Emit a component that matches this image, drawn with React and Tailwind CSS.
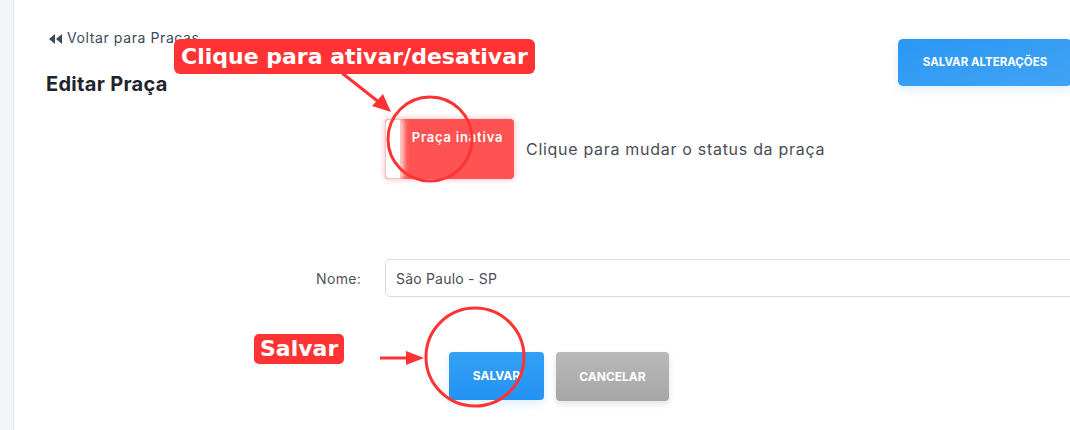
import React from "react";

const inter = { fontFamily: "Inter, 'Noto Sans', sans-serif" };
const dejavu = { fontFamily: "'DejaVu Sans', sans-serif" };

export default function App() {
  return (
    <div className="relative w-[1070px] h-[430px] overflow-hidden bg-white flex" style={inter}>
      <div className="w-[14px] shrink-0 bg-[#f4f5f8] border-r border-[#e9eaef]" />
      <div className="flex-1 pl-[32px] pt-[28px] flex flex-col">
        <div className="flex justify-between">
          <div className="flex flex-col">
            <div className="flex items-center gap-[4px] text-[14px] tracking-[0.6px] text-[#3d4a5c] leading-[20px] pl-[3px]">
              <svg width="14" height="10" viewBox="0 0 14 10" className="mt-[1px]">
                <path d="M6 0 L0 5 L6 10 Z M13 0 L7 5 L13 10 Z" fill="#3d4a5c" />
              </svg>
              <span>Voltar para Praças</span>
            </div>
            <div className="mt-[23px] text-[20px] tracking-[0.3px] font-bold text-[#1f232b] leading-[26px]">Editar Praça</div>
          </div>
          <button className="mt-[11px] -mr-[2px] w-[174px] h-[47px] rounded-[5px] bg-gradient-to-br from-[#2a97f3] to-[#41a3f5] text-white text-[11.5px] font-bold shadow-[0_4px_10px_rgba(33,150,243,0.15)]">
            SALVAR ALTERAÇÕES
          </button>
        </div>

        <div className="grid grid-cols-[315px_1fr] gap-x-[24px] mt-[22px]">
          <div />
          <div className="flex items-center gap-[12px] h-[60px]">
            <div className="relative w-[129px] h-[60px] rounded-[4px] bg-[#ff5252] shadow-[0_0_6px_rgba(255,82,82,0.45)] overflow-hidden flex">
              <div className="w-[16px] h-full bg-white border border-[#f3c2c2] rounded-l-[4px] shadow-[3px_0_5px_rgba(255,230,230,0.9)]" />
              <div className="flex-1 text-center text-white text-[13px] tracking-[0.8px] font-semibold pt-[10px] leading-[16px]">Praça inativa</div>
            </div>
            <span className="text-[16px] tracking-[0.7px] text-[#4a4d55]">Clique para mudar o status da praça</span>
          </div>

          <div className="mt-[80px] text-right text-[14px] tracking-[0.3px] text-[#50535a] self-center">Nome:</div>
          <div className="mt-[80px] h-[38px] -mr-[20px] rounded-[5px] border border-[#dcdde3] flex items-center pl-[10px] text-[14px] tracking-[0.2px] text-[#4a4d55]">
            São Paulo - SP
          </div>

          <div />
          <div className="mt-[55px] flex gap-[12px] pl-[64px]">
            <button className="w-[95px] h-[48px] rounded-[4px] bg-gradient-to-b from-[#33a0f5] to-[#2393f2] text-white text-[12px] font-bold shadow-[0_4px_10px_rgba(33,150,243,0.15)]">SALVAR</button>
            <button className="w-[113px] h-[49px] rounded-[4px] bg-gradient-to-b from-[#b9b9b9] to-[#a6a6a6] text-white text-[12px] font-bold shadow-[0_3px_6px_rgba(0,0,0,0.12)]">CANCELAR</button>
          </div>
        </div>
      </div>

      {/* annotations */}
      <div className="absolute left-[174px] top-[39px] h-[35px] px-[7px] rounded-[6px] bg-[#ff3333] text-white text-[22px] font-bold leading-[35px]" style={dejavu}>
        Clique para ativar/desativar
      </div>
      <div className="absolute left-[254px] top-[334px] h-[30px] px-[6px] rounded-[5px] bg-[#ff3333] text-white text-[22px] font-bold leading-[30px]" style={dejavu}>
        Salvar
      </div>
      <svg className="absolute left-0 top-0 pointer-events-none" width="1070" height="430">
        <line x1="342" y1="73" x2="380" y2="103" stroke="#ff3333" strokeWidth="3" />
        <polygon points="391,112 372,106 383,94" fill="#ff3333" />
        <ellipse cx="430" cy="139" rx="42" ry="42" fill="none" stroke="#ff3333" strokeWidth="3" />
        <line x1="380" y1="358" x2="412" y2="358" stroke="#ff3333" strokeWidth="3" />
        <polygon points="424,358 406,351 406,365" fill="#ff3333" />
        <ellipse cx="475" cy="357" rx="49" ry="49" fill="none" stroke="#ff3333" strokeWidth="3" />
      </svg>
    </div>
  );
}
